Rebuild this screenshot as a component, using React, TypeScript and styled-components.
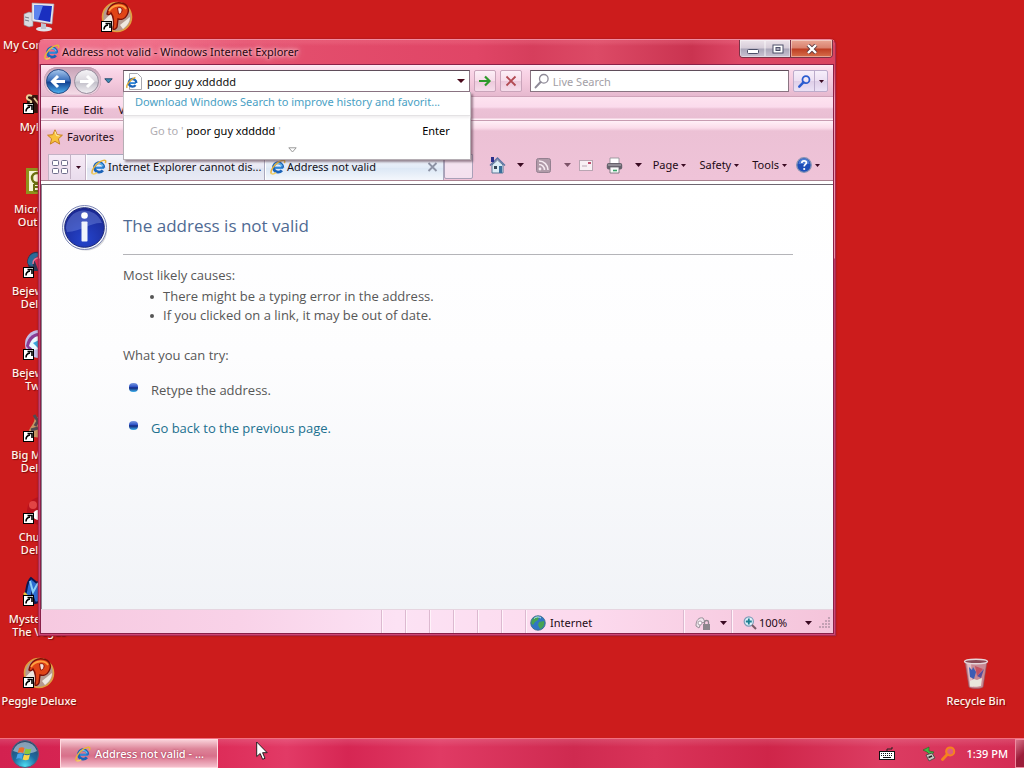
import React from "react";
import styled, { createGlobalStyle, css } from "styled-components";

const ui = `"Noto Sans", "Open Sans", sans-serif`;
const page = `"Open Sans", "Noto Sans", sans-serif`;

const GlobalStyle = createGlobalStyle`
  *, *::before, *::after { box-sizing: border-box; }
  body { margin: 0; font-family: ${ui}; font-size: 11px; line-height: 16px; color: #1d0a14; overflow: hidden; }
  button, input { font: inherit; color: inherit; padding: 0; margin: 0; border: 0; background: none; }
  svg { display: block; flex: none; }
`;

const Screen = styled.div`
  display: flex;
  flex-direction: column;
  height: 100vh;
  background: #cc1c1c;
`;

const Desktop = styled.main`
  position: relative;
  flex: 1;
  min-height: 0;
`;

/* ---------- desktop shortcuts ---------- */

const ShortcutGrid = styled.div`
  display: grid;
  grid-auto-flow: column;
  grid-template-rows: repeat(9, 82px);
  grid-auto-columns: 78px;
  width: max-content;
`;

const Shortcut = styled.button`
  display: flex;
  flex-direction: column;
  align-items: center;
  justify-content: flex-start;
  gap: 4px;
  padding-top: 1px;
  font-size: 11px;
  font-weight: 500;
  line-height: 13px;
  color: #fff4ec;
  text-shadow: 1px 1px 1px #7c0d0d;
`;

const ShortcutLabel = styled.span`
  display: block;
  white-space: pre-line;
  text-align: center;
`;

const BinSlot = styled.div`
  position: absolute;
  right: 9px;
  bottom: 0;
  width: 78px;
  height: 82px;
  display: flex;
  justify-content: center;
`;

/* ---------- window ---------- */

const Window = styled.section`
  position: absolute;
  inset: 39px 188px 102px 38px;
  display: flex;
  flex-direction: column;
  padding: 0 1px 1px;
  border: 1px solid #a92a50;
  border-top-color: #f08ba0;
  border-radius: 6px 6px 0 0;
  background: linear-gradient(180deg, #ec5272, #dc4560 24px, #f09ab0 60px, #ee8fa8 218px, #c23a66 219px, #cf4676);
  box-shadow: 0 0 2px #8c1720;
`;

const TitleBar = styled.header`
  display: flex;
  align-items: center;
  height: 24px;
  flex: none;
  margin: 0 -1px;
  padding-left: 5px;
  gap: 2px;
  border-radius: 5px 5px 0 0;
  font-size: 11px;
  color: #2a0510;
  background:
    linear-gradient(180deg, #f4809444 0 2px, transparent 6px),
    linear-gradient(90deg, #ee6c88 0, #ee6a86 14%, #e4506e 26%, #e04566 55%, #d63e5c 62%, #dc4a66 70%, #ca3350 82%, #dd4766 88%, #d9435f);
`;

const Title = styled.h1`
  flex: 1;
  margin: 0;
  font-size: 11px;
  font-weight: 400;
  text-shadow: 0 0 3px #ffc8d0, 0 0 5px #ffc8d0, 0 0 8px #ffc8d0;
`;

const Caption = styled.div`
  display: flex;
  align-self: flex-start;
  height: 18px;
  margin-right: 2px;
  border: 1px solid #7b3347;
  border-top: 0;
  border-radius: 0 0 4px 4px;
  overflow: hidden;
`;

const CaptionButton = styled.button<{ $close?: boolean }>`
  display: flex;
  align-items: center;
  justify-content: center;
  width: ${(p) => (p.$close ? 42 : 25)}px;
  border-left: ${(p) => (p.$close ? "1px solid #7b3347" : "0")};
  box-shadow: inset 0 0 0 1px #ffffff66;
  background: ${(p) =>
    p.$close
      ? "linear-gradient(180deg, #e9a795 0, #d9806c 48%, #bd3d22 52%, #d8704c)"
      : "linear-gradient(180deg, #ece3ea 0, #d5ccd8 48%, #a9a5b8 52%, #cbc3d2)"};
`;

const Client = styled.div`
  flex: 1;
  min-height: 0;
  display: flex;
  flex-direction: column;
  border: 1px solid #8a2048;
  background: #fff;
`;

const NavRow = styled.div`
  position: relative;
  z-index: 2;
  display: flex;
  align-items: center;
  flex: none;
  height: 32px;
  padding: 0 5px 0 3px;
  background: linear-gradient(180deg, #fdeaf4 0, #f9d6e8 6px, #f3c8dc 18px, #e6b9cf 31px, #b98ea4 32px);
`;

const RoundNav = styled.div`
  display: flex;
  align-items: center;
  gap: 1px;
  height: 28px;
  padding: 0 1px;
  border-radius: 14px;
  background: linear-gradient(180deg, #c7a2b6, #f6dce8);
  box-shadow: inset 0 0 1px #8d6a80;
`;

const PlainButton = styled.button<{ $w?: number }>`
  display: flex;
  align-items: center;
  justify-content: center;
  width: ${(p) => (p.$w ? `${p.$w}px` : "auto")};
  height: 22px;
  flex: none;
`;

const AddressWrap = styled.div`
  position: relative;
  flex: 348 1 0;
  min-width: 0;
  margin-left: 8px;
`;

const field = css`
  display: flex;
  align-items: center;
  height: 22px;
  border: 1px solid #8a7482;
  border-top-color: #5f4d5a;
  background: #fff;
`;

const AddressField = styled.label`
  ${field}
  padding: 0 4px 0 2px;
  gap: 5px;
`;

const SearchField = styled.label`
  ${field}
  flex: 255 1 0;
  min-width: 0;
  margin-left: 8px;
  padding-left: 3px;
  gap: 3px;
`;

const TextInput = styled.input`
  flex: 1;
  min-width: 0;
  height: 20px;
  outline: 0;
  font-size: 11px;
  color: #111;
  &::placeholder { color: #a3a0a6; opacity: 1; }
`;

const ToolButton = styled.button`
  display: flex;
  align-items: center;
  justify-content: center;
  width: 22px;
  height: 22px;
  flex: none;
  margin-left: 4px;
  border: 1px solid #c9a4ba;
  border-radius: 2px;
  background: linear-gradient(180deg, #fdeff7, #f7dcea 50%, #edc9dc 52%, #f6dcea);
`;

const SplitButton = styled.div`
  display: flex;
  height: 22px;
  flex: none;
  margin-left: 4px;
  border: 1px solid #bcaccb;
  border-radius: 2px;
  background: linear-gradient(180deg, #f7effb, #ecdff2 50%, #dfcfe8 52%, #ece2f6);
  & > button { height: 20px; }
  & > button + button { border-left: 1px solid #bcaccb; }
`;

const Suggestions = styled.div`
  position: absolute;
  top: 22px;
  left: 0;
  right: -1px;
  height: 68px;
  display: flex;
  flex-direction: column;
  border: 1px solid #b5aeb4;
  border-top: 0;
  background: #fff;
  box-shadow: 2px 2px 2px #5b404e99;
`;

const SuggestLink = styled.a`
  flex: none;
  padding: 1px 11px 0;
  height: 24px;
  line-height: 18px;
  font-size: 11px;
  color: #4a9fc4;
  text-decoration: none;
  white-space: nowrap;
  border-bottom: 1px solid #e4e2e4;
  box-shadow: 0 2px 2px #f2f0f2;
`;

const SuggestRow = styled.div`
  display: flex;
  align-items: center;
  height: 30px;
  padding: 0 20px 0 26px;
  color: #000;
`;

const Faint = styled.span`
  color: #b0adb2;
  white-space: pre;
`;

const Push = styled.span`
  flex: 1;
`;

const More = styled.div`
  display: flex;
  justify-content: center;
  padding: 1px 9px 0 0;
`;

const MenuRow = styled.nav`
  display: flex;
  align-items: center;
  flex: none;
  height: 23px;
  padding: 3px 0 0 10px;
  gap: 15px;
  background: linear-gradient(180deg, #fde3f0 0, #fbdbec 10px, #ecc1d6 12px, #e9bed3 21px, #fff0f7 22px);
`;

const MenuButton = styled.button`
  font-size: 11px;
`;

const Bands = styled.div`
  flex: none;
  background: linear-gradient(180deg, #c79cb1 0 1px, #fff0f7 1px, #fbdcea 8px, #ecc1d5 11px, #efc3d8);
  border-bottom: 1px solid #a8818f;
`;

const FavRow = styled.div`
  display: flex;
  align-items: center;
  height: 34px;
  padding-left: 6px;
`;

const FavButton = styled.button`
  display: flex;
  align-items: center;
  gap: 4px;
`;

const TabRow = styled.div`
  display: flex;
  align-items: stretch;
  height: 26px;
  padding: 0 13px 0 7px;
`;

const QuickTabs = styled.div`
  display: flex;
  flex: none;
  border: 1px solid #c3b2c5;
  border-bottom: 0;
  background: linear-gradient(180deg, #f6eaf6, #e9dcec);
  & > button { height: 24px; }
  & > button + button { border-left: 1px solid #c3b2c5; }
`;

const Tab = styled.div<{ $active?: boolean }>`
  display: flex;
  align-items: center;
  flex: 0 1 179px;
  min-width: 0;
  padding: 0 5px 2px 4px;
  border: 1px solid #a9a8bd;
  border-left-color: #fff;
  border-bottom: 0;
  background: ${(p) =>
    p.$active
      ? "linear-gradient(180deg, #f4f8fd, #e2ebf7 50%, #dbe7f5 52%, #f4f7fc)"
      : "linear-gradient(180deg, #f5f4fb, #e8e8f4 50%, #dfe4f1 52%, #e9eaf5)"};
`;

const TabButton = styled.button`
  display: flex;
  align-items: center;
  gap: 1px;
  flex: 1;
  min-width: 0;
  white-space: nowrap;
  color: #141018;
`;

const NewTab = styled.button`
  width: 29px;
  flex: none;
  margin-bottom: 1px;
  border: 1px solid #a9a0b8;
  border-radius: 0 0 2px 2px;
  background: linear-gradient(180deg, #f4e6f2, #f4e0ee);
`;

const Commands = styled.div`
  display: flex;
  flex: 1;
  align-items: center;
  justify-content: flex-end;
  padding-bottom: 4px;
`;

const Command = styled.button<{ $gap: number }>`
  display: flex;
  align-items: center;
  gap: 3px;
  height: 20px;
  flex: none;
  margin-left: ${(p) => p.$gap}px;
  font-size: 11px;
`;

const Document = styled.article`
  flex: 1;
  min-height: 0;
  display: flex;
  gap: 14px;
  align-items: flex-start;
  margin-top: 3px;
  padding: 19px 40px 0 20px;
  border-top: 1px solid #6d6670;
  border-left: 1px solid #8d8590;
  font-family: ${page};
  font-size: 13px;
  line-height: 19px;
  color: #575757;
  background: linear-gradient(180deg, #fff 0, #fdfdfe 40%, #f1f3f7);
  overflow: hidden;
`;

const DocBody = styled.div`
  flex: 1;
  min-width: 0;
  padding-left: 1px;
`;

const DocTitle = styled.h2`
  margin: 0;
  height: 51px;
  padding-top: 9px;
  line-height: 26px;
  font-size: 17px;
  font-weight: 400;
  color: #4f6a93;
  border-bottom: 1px solid #b4b4b8;
`;

const Para = styled.p<{ $top: number }>`
  margin: ${(p) => p.$top}px 0 0;
`;

const Causes = styled.ul`
  margin: 2px 0 0;
  padding: 0 0 0 26px;
  list-style: none;
  & > li { display: flex; align-items: center; gap: 9px; }
  & > li::before { content: ""; width: 4px; height: 4px; margin-left: 1px; border-radius: 2px; background: #555; }
`;

const Steps = styled.ul`
  display: flex;
  flex-direction: column;
  gap: 19px;
  margin: 16px 0 0;
  padding: 0 0 0 6px;
  list-style: none;
  & > li { display: flex; gap: 13px; }
`;

const Bead = styled.span`
  width: 9px;
  height: 9px;
  margin-top: 2px;
  border-radius: 4px;
  background: linear-gradient(180deg, #7d9be0 0, #2f55c8 40%, #12277e 55%, #3fb4ee);
`;

const DocLink = styled.a`
  color: #21708f;
  text-decoration: none;
`;

const StatusBar = styled.footer`
  display: flex;
  align-items: stretch;
  flex: none;
  height: 24px;
  border-top: 1px solid #e6d5e0;
  background: linear-gradient(90deg, #f6c9e0, #f9d2e8 25%, #fce2f4 45%, #fcd9ed 70%, #f4c4da);
`;

const StatusCell = styled.div<{ $w: number }>`
  display: flex;
  align-items: center;
  width: ${(p) => p.$w}px;
  padding: 2px 4px 0;
  gap: 4px;
  flex: none;
  border-left: 1px solid #dcb9d0;
  box-shadow: inset 1px 0 #fff3fa;
`;

const ZoomCell = styled(StatusCell)`
  padding: 3px 2px 0 11px;
  gap: 2px;
`;

const ZoomTail = styled.div`
  display: flex;
  align-items: center;
  gap: 7px;
`;

/* ---------- taskbar ---------- */

const Taskbar = styled.footer`
  display: flex;
  align-items: stretch;
  flex: none;
  height: 30px;
  border-top: 1px solid #f27080;
  color: #fff;
  background:
    linear-gradient(180deg, #ffffff22, transparent 8px),
    linear-gradient(90deg, #d32150 0, #dc2a56 20%, #e23a66 28%, #d62653 34%, #e03a64 43%, #cf2a50 56%, #d93359 64%, #cf2549 75%, #dc3c62 86%, #d42c54);
`;

const Start = styled.button`
  width: 60px;
  padding-left: 10px;
`;

const TaskButton = styled.button`
  display: flex;
  align-items: center;
  gap: 4px;
  width: 158px;
  padding-left: 14px;
  font-size: 11px;
  font-weight: 500;
  color: #fff;
  border: 1px solid #ffd8de;
  text-shadow: 0 0 2px #8e2340;
  background: linear-gradient(180deg, #f8cfd7 0, #dd8599 9px, #d8708a 16px, #f4bfcc 27px);
`;

const Tray = styled.div`
  display: flex;
  align-items: center;
  margin-left: auto;
`;

const Clock = styled.time`
  margin: 0 7px 0 10px;
  font-size: 11px;
  font-weight: 500;
`;

const ShowDesktop = styled.button`
  width: 9px;
  height: 29px;
  border: 1px solid #ef8ba0;
  border-right: 0;
  background: linear-gradient(135deg, #d9748a, #9c1d3a 60%);
`;

const Pointer = styled.svg`
  position: fixed;
  left: 256px;
  top: 741px;
  z-index: 5;
`;

/* ---------- drawings ---------- */

const IELogo = ({ size = 17 }: { size?: number }) => (
  <svg width={size} height={size} viewBox="0 0 17 17" aria-hidden="true">
    <path d="M14 9.3H5.2" stroke="#2f87d8" strokeWidth="2.4" />
    <path d="M13.6 9.2A5 5 0 1 0 12.6 12" fill="none" stroke="#1b63b8" strokeWidth="3" />
    <path d="M13 8A4.6 4.6 0 0 0 4.6 7" fill="none" stroke="#67c2f3" strokeWidth="1.2" />
    <path d="M1.6 15.6C-.6 13.2 5 4.2 12.3 1.7 15.4.7 16.3 1.8 15.2 4.4" fill="none" stroke="#e9b43a" strokeWidth="1.6" />
    <path d="M1.6 15.6c1.4.8 3.4 0 5-1.3" fill="none" stroke="#f3cf5e" strokeWidth="1.5" />
  </svg>
);

const Caret = ({ w = 8, color = "#3a0a22" }: { w?: number; color?: string }) => (
  <svg width={w} height={w < 6 ? 3 : 4} viewBox="0 0 8 5" preserveAspectRatio="none" aria-hidden="true">
    <path d="M0 0h8L4 5z" fill={color} />
  </svg>
);

const Arrow = ({ back }: { back?: boolean }) => (
  <svg width="27" height="27" viewBox="0 0 27 27" aria-hidden="true">
    <defs>
      <linearGradient id={back ? "nb" : "nf"} x1="0" y1="0" x2="0" y2="1">
        <stop offset="0" stopColor={back ? "#a9c9ee" : "#f6f4f7"} />
        <stop offset=".48" stopColor={back ? "#3569b7" : "#d9d6dd"} />
        <stop offset=".52" stopColor={back ? "#123f8f" : "#c2bfc9"} />
        <stop offset="1" stopColor={back ? "#4fb4f2" : "#f2f0f4"} />
      </linearGradient>
    </defs>
    <circle cx="13.5" cy="13.5" r="12" fill={`url(#${back ? "nb" : "nf"})`} stroke={back ? "#274a83" : "#958a9b"} />
    <path
      d={back ? "M20 13.5H8M13 8l-5.5 5.5L13 19" : "M7 13.5h12M14 8l5.5 5.5L14 19"}
      fill="none"
      stroke="#fff"
      strokeWidth="3"
    />
  </svg>
);

const Magnifier = ({ color, size = 16, w = 1.6 }: { color: string; size?: number; w?: number }) => (
  <svg width={size} height={size} viewBox="0 0 16 16" aria-hidden="true">
    <circle cx="9.8" cy="5.8" r="4.3" fill="#ffffff33" stroke={color} strokeWidth={w} />
    <path d="M6.6 9L1.6 14.4" stroke={color} strokeWidth={w + 0.8} strokeLinecap="round" />
  </svg>
);

const ShortcutArrow = () => (
  <g>
    <rect x="1.500" y="20.500" width="10" height="10" fill="#fff" stroke="#000" />
    <path d="M4 28.500c0-3 1-4 4-4.500M5.500 22.500H10V27" fill="none" stroke="#000" strokeWidth="1.600" />
  </g>
);

const ComputerArt = () => (
  <>
    <path d="M2 13l5-2 4 1v13l-4 1-5-2z" fill="#d9dbe0" stroke="#8b8d98" strokeWidth=".6" />
    <path d="M3 16l4 1M3 19l4 1" stroke="#777b88" />
    <path d="M10 2l22 1-2 20-20-3z" fill="#e6e8ee" stroke="#9a9cab" strokeWidth=".6" />
    <path d="M12 4l18 1-1.800 16L12 18z" fill="#1a2fc0" />
    <path d="M12 4l9 .5L16 19l-4-1z" fill="#5c84ee" />
    <ellipse cx="22" cy="28" rx="8" ry="2.600" fill="#e1e3ea" />
    <path d="M19 22l5 1v5h-5z" fill="#bfc2cf" />
  </>
);

const PeggleArt = () => (
  <>
    <circle cx="17" cy="16" r="14.500" fill="#b59a90" stroke="#e0a040" strokeWidth="1.600" />
    <path d="M3.500 20l8-8 5 8-6 8zM20 24l10-8c0 5-3 9-7 12z" fill="#efe8e0" />
    <path d="M13 28c1-6 1-12-2-16-1 2-3 2-4 1C9 3 16 1 21 2c7 1 9 7 6 12-2 4-6 5-9 4l-1 8c-1 2-3 3-4 2z" fill="#e04416" stroke="#7c1008" strokeWidth="1.400" />
    <path d="M17.500 7c3-1 5 0 4.500 3-.5 2-2 3.500-3.500 3z" fill="#f3e2dc" stroke="#8c1408" />
    <path d="M9 10c4-7 14-7 17-2" fill="none" stroke="#ffa040" strokeWidth="1.800" />
  </>
);

const art: Record<string, React.ReactNode> = {
  computer: <ComputerArt />,
  peggle: <PeggleArt />,
  pets: (
    <>
      <rect x="5" y="12" width="26" height="18" fill="#34150e" />
      <path d="M10 13c-5-3-7 3-3 4s2 5-2 4M12 15l4 5 5-6" fill="none" stroke="#e6cf98" strokeWidth="2" />
    </>
  ),
  outlook: (
    <>
      <rect x="4" y="3" width="28" height="26" fill="#8f921c" />
      <rect x="7" y="6" width="22" height="20" fill="#f7f4d8" />
      <circle cx="15" cy="13" r="5" fill="none" stroke="#6b7010" strokeWidth="2.500" />
      <path d="M12 19h7M12 19v7M12 22h6M12 26h7" stroke="#6b7010" strokeWidth="2" />
    </>
  ),
  gems: (
    <>
      <path d="M5 15C6 5 14 3 20 6v18H8z" fill="#2d3654" />
      <path d="M6 13c2-8 10-9 14-4-7 0-10 4-9 10-4 0-6-2-5-6z" fill="#2b6c98" />
      <path d="M12 12l6-4 8 8-9 9z" fill="#d92d53" />
      <path d="M11 17c0-4 2-6 6-6" stroke="#e87a9a" fill="none" strokeWidth="1.400" />
    </>
  ),
  twist: (
    <>
      <circle cx="17" cy="15" r="14" fill="#c3bde6" />
      <path d="M4 17C6 5 15 3 22 4L8 22z" fill="#8a3d94" />
      <path d="M7 17C9 10 13 7 18 7l2 12-8 2z" fill="#e9faff" />
      <path d="M11 14l8-4v12z" fill="#3aa5dc" />
    </>
  ),
  money: (
    <>
      <path d="M6 25c0-9 7-11 7-20 8 3 14 12 12 23z" fill="#c69563" />
      <path d="M12 4l4 6-3 5M9 19l7-2" stroke="#514a50" strokeWidth="3" fill="none" />
    </>
  ),
  chuzzle: (
    <>
      <circle cx="19" cy="18" r="14" fill="#b9121d" />
      <circle cx="16" cy="22" r="5" fill="#fff" />
      <circle cx="11" cy="12" r="4" fill="#e14445" />
    </>
  ),
  mystery: (
    <>
      <path d="M2 21c4-4 1-12 7-18l6 5 8-6-2 24-8 2-3-9-2 9z" fill="#2c6cd0" stroke="#0a1850" strokeWidth="2" />
      <path d="M8 6l3 11 5-9" fill="none" stroke="#8ad0f6" strokeWidth="2" />
      <path d="M2 18l5 5" stroke="#e8c640" strokeWidth="2.500" />
    </>
  ),
};

const shortcuts: { id: string; label: string; link: boolean }[] = [
  { id: "computer", label: "My Computer", link: false },
  { id: "pets", label: "MyPets", link: true },
  { id: "outlook", label: "Microsoft\nOutlook", link: false },
  { id: "gems", label: "Bejeweled\nDeluxe", link: true },
  { id: "twist", label: "Bejeweled\nTwist", link: true },
  { id: "money", label: "Big Money\nDeluxe", link: true },
  { id: "chuzzle", label: "Chuzzle\nDeluxe", link: true },
  { id: "mystery", label: "Mystery P.I.\nThe Vegas", link: true },
  { id: "peggle", label: "Peggle Deluxe", link: true },
  { id: "peggle", label: "", link: true },
];

const ShortcutIcon = ({ id, link }: { id: string; link: boolean }) => (
  <svg width="34" height="33" viewBox="0 0 34 33" aria-hidden="true">
    {art[id]}
    {link && <ShortcutArrow />}
  </svg>
);

const BinIcon = () => (
  <svg width="28" height="33" viewBox="0 0 28 33" aria-hidden="true">
    <path d="M3 4h22l-4 26c-3 2-11 2-14 0z" fill="#c98a94" stroke="#8f5a66" strokeWidth=".6" />
    <path d="M5 6h4l2 24H8z" fill="#f2dfe2" opacity=".6" />
    <path d="M7 10l3 3 1-3 3 5-2 7-4-2z" fill="#3c5cb4" />
    <path d="M15 19l7-7-3 9z" fill="#5a4f9d" />
    <path d="M13 9l8 3-6 7z" fill="#c4505f" />
    <path d="M8 24l4-2 3 1 5-2-1 8c-3 1-8 1-11 0z" fill="#e9e6dc" />
    <ellipse cx="14" cy="4.500" rx="11.500" ry="2.300" fill="#8a4a56" stroke="#e6d6da" strokeWidth="1.400" />
  </svg>
);

const InfoIcon = () => (
  <svg width="46" height="48" viewBox="0 0 46 48" aria-hidden="true">
    <defs>
      <radialGradient id="info" cx=".5" cy=".8" r=".8">
        <stop offset="0" stopColor="#2444cc" />
        <stop offset="1" stopColor="#1a2690" />
      </radialGradient>
    </defs>
    <ellipse cx="24" cy="26.500" rx="21" ry="20" fill="#b9bac0" opacity=".6" />
    <circle cx="22.500" cy="23.500" r="22" fill="#f2f4fa" stroke="#7d86b6" />
    <circle cx="22.500" cy="23.500" r="19.800" fill="url(#info)" stroke="#1c2878" />
    <path d="M4 24a18.500 18.500 0 0 1 36-5C30 18 20 27 5 28z" fill="#8ba4ee" opacity=".35" />
    <circle cx="22.500" cy="11.500" r="3.300" fill="#fff" />
    <rect x="19.500" y="17.500" width="6" height="20" rx=".8" fill="#f0f4fc" />
  </svg>
);

const HomeIcon = () => (
  <svg width="17" height="18" viewBox="0 0 17 18" aria-hidden="true">
    <path d="M3 9v8h11V9L8.500 4z" fill="#dcecf6" stroke="#5b7896" />
    <path d="M1 9.500L8.500 2l7.500 7.500" fill="none" stroke="#5c76a4" strokeWidth="1.500" />
    <rect x="2" y="1" width="3" height="5" fill="#2b2f8c" />
    <rect x="5" y="10" width="3" height="3" fill="#345" />
    <rect x="10" y="10" width="3" height="7" fill="#3a6f9c" />
  </svg>
);

const RssIcon = () => (
  <svg width="15" height="15" viewBox="0 0 15 15" aria-hidden="true">
    <rect x=".5" y=".5" width="14" height="14" rx="2" fill="#b09aa8" stroke="#948090" />
    <circle cx="4" cy="11" r="1.400" fill="#f6eaf1" />
    <path d="M3 6.500A5.500 5.500 0 0 1 8.500 12M3 3a9 9 0 0 1 9 9" fill="none" stroke="#f6eaf1" strokeWidth="1.600" />
  </svg>
);

const MailIcon = () => (
  <svg width="14" height="11" viewBox="0 0 14 11" aria-hidden="true">
    <rect x=".5" y=".5" width="13" height="10" fill="#f8f0f4" stroke="#b9a5b2" />
    <rect x="9" y="2" width="3" height="2" fill="#c05070" />
    <path d="M3 6h5" stroke="#b9a5b2" />
  </svg>
);

const PrinterIcon = () => (
  <svg width="17" height="17" viewBox="0 0 17 17" aria-hidden="true">
    <path d="M4 1h9v6H4z" fill="#fff" stroke="#8a8a90" strokeWidth=".8" />
    <rect x=".8" y="6" width="15.400" height="6.500" rx="2" fill="#66626c" />
    <path d="M2 8h13" stroke="#b9b5bd" />
    <path d="M4 10h9v6H4z" fill="#f8fafa" stroke="#6a6670" strokeWidth=".8" />
    <path d="M7 13.500h4" stroke="#37a067" strokeWidth="1.600" />
  </svg>
);

const HelpIcon = () => (
  <svg width="16" height="16" viewBox="0 0 16 16" aria-hidden="true">
    <circle cx="8" cy="8" r="7.300" fill="#1f4fb8" stroke="#8794b5" strokeWidth="1.300" />
    <path d="M2.500 7a5.500 5.500 0 0 1 11 0z" fill="#6e9be6" opacity=".6" />
    <path d="M5.800 6c0-3 4.600-2.800 4.600-.2 0 1.700-2.200 1.600-2.200 3.600" fill="none" stroke="#fff" strokeWidth="1.700" />
    <circle cx="8.200" cy="12" r="1.100" fill="#fff" />
  </svg>
);

const StarIcon = () => (
  <svg width="16" height="16" viewBox="0 0 16 16" aria-hidden="true">
    <path d="M8 .8l2.200 4.900 5.200.5-4 3.600 1.300 5.300L8 12.300l-4.700 2.800L4.600 9.800l-4-3.600 5.200-.5z" fill="#f8c23c" stroke="#c8811c" />
    <path d="M8 2.500l1.500 4 3 .5" fill="none" stroke="#ffeeb0" />
  </svg>
);

const Globe = () => (
  <svg width="16" height="16" viewBox="0 0 16 16" aria-hidden="true">
    <circle cx="8" cy="8" r="7.300" fill="#2f76c4" stroke="#3a6b80" strokeWidth=".8" />
    <path d="M2 5c2-3 5-4 7-3l-1 3-3 2-2 3C1 9 1 7 2 5zM9 7l5-1c1 4-1 7-4 8l-2-4z" fill="#46a352" />
    <path d="M4 3.500C6 1.500 9 1.500 11 3" stroke="#bfe6f4" fill="none" />
  </svg>
);

const LockIcon = () => (
  <svg width="17" height="16" viewBox="0 0 17 16" aria-hidden="true">
    <path d="M2 11C2 5 5 2 9 3l2 4-4 1-2 5z" fill="#eee6ec" stroke="#9a8f99" />
    <circle cx="6" cy="8" r="2" fill="#fff" stroke="#a79ca6" />
    <rect x="9" y="9" width="7" height="6" fill="#8c868c" />
    <path d="M10.500 9V7c0-2 4-2 4 0v2" fill="none" stroke="#8c868c" strokeWidth="1.300" />
  </svg>
);

const ZoomIcon = () => (
  <svg width="14" height="14" viewBox="0 0 14 14" aria-hidden="true">
    <circle cx="5.800" cy="5.500" r="4.600" fill="#dff2fb" stroke="#7d9cb8" strokeWidth="1.200" />
    <path d="M5.800 2.500v6M2.800 5.500h6" stroke="#1d7f92" strokeWidth="1.800" />
    <path d="M9 9l4 4" stroke="#7a5a66" strokeWidth="2" />
  </svg>
);

const Grip = () => (
  <svg width="12" height="12" viewBox="0 0 12 12" aria-hidden="true">
    <path d="M9 1h2M9 4h2M6 4h2M9 7h2M6 7h2M3 7h2M9 10h2M6 10h2M3 10h2M0 10h2" stroke="#b295a8" strokeWidth="1.600" />
  </svg>
);

const StartOrb = () => (
  <svg width="30" height="29" viewBox="0 0 30 29" aria-hidden="true">
    <defs>
      <radialGradient id="orb" cx=".5" cy=".95" r=".9">
        <stop offset="0" stopColor="#4fe0f4" />
        <stop offset=".5" stopColor="#1d6aa0" />
        <stop offset="1" stopColor="#2b4668" />
      </radialGradient>
    </defs>
    <circle cx="15" cy="15" r="13.500" fill="url(#orb)" stroke="#54617e" />
    <path d="M3 12a12.500 12.500 0 0 1 24 0c-8 4-16 3-24 0z" fill="#d6e4ee" opacity=".55" />
    <path d="M9 9c2-1 4-1 5.500 0l-1.300 5c-2-1-3.500-1-5.500 0z" fill="#ee6a2c" />
    <path d="M15.500 9.500c2 1 4 1 6 0l-1.400 5c-2 1-4 1-6 0z" fill="#8cc83c" />
    <path d="M7.500 15c2-1 3.500-1 5.500 0l-1.300 5c-2-1-3.500-1-5.500 0z" fill="#48a4ea" />
    <path d="M14 15.500c2 1 4 1 6 0l-1.400 5c-2 1-4 1-6 0z" fill="#fbd447" />
  </svg>
);

export default function App() {
  return (
    <Screen>
      <GlobalStyle />
      <Desktop>
        <ShortcutGrid>
          {shortcuts.map((s, i) => (
            <Shortcut key={i} aria-label={s.label || "Peggle"}>
              <ShortcutIcon id={s.id} link={s.link} />
              <ShortcutLabel>{s.label}</ShortcutLabel>
            </Shortcut>
          ))}
        </ShortcutGrid>
        <BinSlot>
          <Shortcut>
            <BinIcon />
            <ShortcutLabel>Recycle Bin</ShortcutLabel>
          </Shortcut>
        </BinSlot>

        <Window>
          <TitleBar>
            <IELogo size={16} />
            <Title>Address not valid - Windows Internet Explorer</Title>
            <Caption>
              <CaptionButton aria-label="Minimize">
                <svg width="12" height="12"><rect x=".5" y="6.500" width="11" height="4" rx="1" fill="#fff" stroke="#4c4f68" /></svg>
              </CaptionButton>
              <CaptionButton aria-label="Maximize">
                <svg width="12" height="10"><rect x="1" y="1" width="10" height="8" fill="#fff" stroke="#4c4f68" /><rect x="4" y="3.500" width="4" height="3" fill="#aaa8ba" stroke="#4c4f68" /></svg>
              </CaptionButton>
              <CaptionButton $close aria-label="Close">
                <svg width="12" height="10"><path d="M2 1l8 8M10 1L2 9" stroke="#5c3a40" strokeWidth="4" /><path d="M2 1l8 8M10 1L2 9" stroke="#fff" strokeWidth="2.400" /></svg>
              </CaptionButton>
            </Caption>
          </TitleBar>

          <Client>
            <NavRow>
              <RoundNav>
                <PlainButton aria-label="Back"><Arrow back /></PlainButton>
                <PlainButton aria-label="Forward"><Arrow /></PlainButton>
              </RoundNav>
              <PlainButton $w={14} aria-label="Recent pages">
                <svg width="9" height="6"><path d="M.8.8h7.400L4.500 5z" fill="#3d8cb4" stroke="#2a4a6c" /></svg>
              </PlainButton>
              <AddressWrap>
                <AddressField>
                  <svg width="16" height="17" viewBox="0 0 16 17" aria-hidden="true">
                    <path d="M3.500.5h8l4 4v12h-12z" fill="#fff" stroke="#a9a9b0" />
                    <g transform="translate(0 3) scale(.76)">
                      <path d="M13 9.300H5.200" stroke="#2f87d8" strokeWidth="2.400" />
                      <path d="M13.600 9.200A5 5 0 1 0 12.600 12" fill="none" stroke="#1b63b8" strokeWidth="3" />
                      <path d="M1.600 15.600C-.6 13.200 5 4.200 12.300 1.700" fill="none" stroke="#e0a832" strokeWidth="1.800" />
                    </g>
                  </svg>
                  <TextInput aria-label="Address" defaultValue="poor guy xddddd" />
                  <PlainButton aria-label="Show address list"><Caret color="#4a0a1c" /></PlainButton>
                </AddressField>
                <Suggestions>
                  <SuggestLink href="#">Download Windows Search to improve history and favorit...</SuggestLink>
                  <SuggestRow>
                    <Faint>Go to ' </Faint>
                    <span>poor guy xddddd</span>
                    <Faint> '</Faint>
                    <Push />
                    <span>Enter</span>
                  </SuggestRow>
                  <More>
                    <svg width="9" height="6" aria-hidden="true"><path d="M.8.8h7.400L4.500 5z" fill="#fff" stroke="#999" /></svg>
                  </More>
                </Suggestions>
              </AddressWrap>
              <ToolButton aria-label="Go">
                <svg width="14" height="12"><path d="M1 6h10M7 1.500L11.500 6 7 10.500" fill="none" stroke="#2f9a2c" strokeWidth="2.200" /></svg>
              </ToolButton>
              <ToolButton aria-label="Stop">
                <svg width="12" height="12"><path d="M1.500 1.500l9 9M10.500 1.500l-9 9" stroke="#b24a52" strokeWidth="1.800" /></svg>
              </ToolButton>
              <SearchField>
                <Magnifier color="#8f8b98" w={1.3} />
                <TextInput aria-label="Search" placeholder="Live Search" />
              </SearchField>
              <SplitButton>
                <PlainButton $w={20} aria-label="Search"><Magnifier color="#2a5cd0" size={13} w={2.2} /></PlainButton>
                <PlainButton $w={13} aria-label="Search options"><Caret w={5} /></PlainButton>
              </SplitButton>
            </NavRow>

            <MenuRow>
              <MenuButton>File</MenuButton>
              <MenuButton>Edit</MenuButton>
              <MenuButton>View</MenuButton>
            </MenuRow>

            <Bands>
              <FavRow>
                <FavButton><StarIcon />Favorites</FavButton>
              </FavRow>
              <TabRow>
                <QuickTabs>
                  <PlainButton $w={21} aria-label="Quick tabs">
                    <svg width="16" height="14"><g fill="#fff" stroke="#6f6f8c"><rect x=".5" y=".5" width="6" height="5" rx="1" /><rect x="9.500" y=".5" width="6" height="5" rx="1" /><rect x=".5" y="8.500" width="6" height="5" rx="1" /><rect x="9.500" y="8.500" width="6" height="5" rx="1" /></g></svg>
                  </PlainButton>
                  <PlainButton $w={15} aria-label="Tab list"><Caret w={5} /></PlainButton>
                </QuickTabs>
                <Tab>
                  <TabButton><IELogo size={16} />Internet Explorer cannot dis...</TabButton>
                </Tab>
                <Tab $active>
                  <TabButton><IELogo size={16} />Address not valid</TabButton>
                  <PlainButton aria-label="Close tab">
                    <svg width="11" height="10"><path d="M1.500 1l8 8M9.500 1l-8 8" stroke="#8d93a5" strokeWidth="1.800" /></svg>
                  </PlainButton>
                </Tab>
                <NewTab aria-label="New tab" />
                <Commands>
                  <Command $gap={0} aria-label="Home"><HomeIcon /></Command>
                  <Command $gap={11} aria-label="Home options"><Caret w={7} /></Command>
                  <Command $gap={12} aria-label="Feeds"><RssIcon /></Command>
                  <Command $gap={13} aria-label="Feed options"><Caret w={7} color="#7d5368" /></Command>
                  <Command $gap={8} aria-label="Read mail"><MailIcon /></Command>
                  <Command $gap={13} aria-label="Print"><PrinterIcon /></Command>
                  <Command $gap={12} aria-label="Print options"><Caret w={7} /></Command>
                  <Command $gap={11}>Page<Caret w={5} /></Command>
                  <Command $gap={13}>Safety<Caret w={5} /></Command>
                  <Command $gap={13}>Tools<Caret w={5} /></Command>
                  <Command $gap={9} aria-label="Help"><HelpIcon /><Caret w={5} /></Command>
                </Commands>
              </TabRow>
            </Bands>

            <Document>
              <InfoIcon />
              <DocBody>
                <DocTitle>The address is not valid</DocTitle>
                <Para $top={11}>Most likely causes:</Para>
                <Causes>
                  <li>There might be a typing error in the address.</li>
                  <li>If you clicked on a link, it may be out of date.</li>
                </Causes>
                <Para $top={21}>What you can try:</Para>
                <Steps>
                  <li><Bead />Retype the address.</li>
                  <li><Bead /><DocLink href="#">Go back to the previous page.</DocLink></li>
                </Steps>
              </DocBody>
            </Document>

            <StatusBar>
              <Push />
              {[0, 1, 2, 3, 4, 5].map((n) => <StatusCell key={n} $w={24} />)}
              <StatusCell $w={158}><Globe />Internet</StatusCell>
              <StatusCell $w={48}>
                <Push /><LockIcon /><Push /><Caret w={7} />
              </StatusCell>
              <ZoomCell $w={102}>
                <ZoomIcon />100%<Push />
                <ZoomTail><Caret w={7} /><Grip /></ZoomTail>
              </ZoomCell>
            </StatusBar>
          </Client>
        </Window>
      </Desktop>

      <Taskbar>
        <Start aria-label="Start"><StartOrb /></Start>
        <TaskButton><IELogo size={16} />Address not valid - ...</TaskButton>
        <Tray>
          <svg width="16" height="13" viewBox="0 0 16 13" aria-hidden="true">
            <path d="M8 4V2h5V0" fill="none" stroke="#222" />
            <rect x=".5" y="4.500" width="15" height="8" fill="#fff" stroke="#111" />
            <path d="M2 6.500h12M2 8.500h12" stroke="#111" strokeDasharray="1 1" />
            <path d="M4 10.500h8" stroke="#111" />
          </svg>
          <svg width="46" height="16" viewBox="-8 0 46 16" aria-hidden="true">
            <path d="M20 4l6-3v4l5 1-3 4-4-4z" fill="#3fb843" stroke="#1c6a26" strokeWidth=".6" />
            <path d="M23 9l6-2 3 5-6 3z" fill="#c9c6c0" stroke="#55504c" />
            <path d="M25.500 11.500l3.500-1.500" stroke="#222" strokeWidth="1.500" />
          </svg>
          <Magnifier color="#f5821e" size={15} w={2.2} />
          <Clock>1:39 PM</Clock>
          <ShowDesktop aria-label="Show desktop" />
        </Tray>
      </Taskbar>

      <Pointer width="13" height="20" viewBox="0 0 13 20" aria-hidden="true">
        <path d="M.7 1v14.500l3.500-3 2.400 5.800 2.400-1-2.400-5.600h4.600z" fill="#fff" stroke="#222" />
      </Pointer>
    </Screen>
  );
}
